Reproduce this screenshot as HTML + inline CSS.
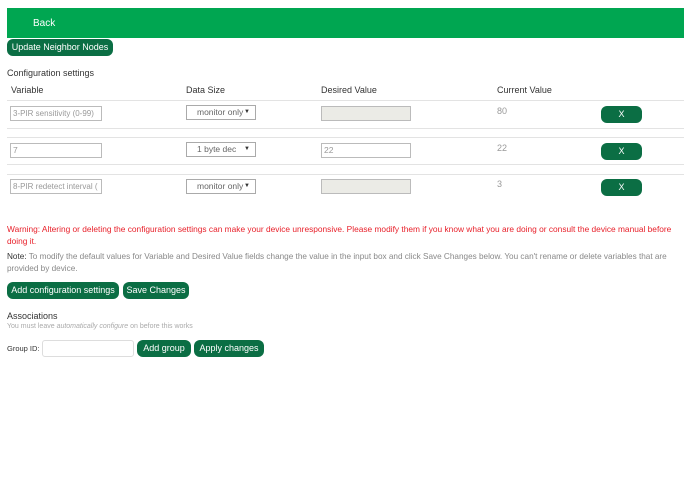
<!DOCTYPE html>
<html><head><style>
*{margin:0;padding:0;box-sizing:border-box}
body{width:690px;height:502px;background:#fff;font-family:"Liberation Sans",sans-serif;font-size:9px;color:#333;position:relative;overflow:hidden}
.a{position:absolute;white-space:nowrap}
.bar{position:absolute;left:7px;top:8px;width:677px;height:30px;background:#00a651}
.btn{position:absolute;background:#0b6e44;color:#fff;border-radius:6px;height:17px;line-height:17px;text-align:center;font-size:9px}
.inp{position:absolute;height:15px;border:1px solid #bbb;background:#fff;color:#999;padding-left:2px;line-height:13px;font-size:8.5px;overflow:hidden;white-space:nowrap}
.dis{background:#ebebe6}
.sel{position:absolute;height:15px;border:1px solid #aaa;background:#fff;color:#666;line-height:13px;font-size:8.5px;padding-left:10px;width:70px}
.sel:after{content:"▼";position:absolute;right:5px;top:0;font-size:6px;color:#333}
.hr{position:absolute;left:7px;width:677px;height:1px;background:#e3e3e3}
.cv{position:absolute;color:#999;font-size:9px}
</style></head><body>
<div class="bar"></div>
<div class="a" style="left:33px;top:18px;color:#fff;font-size:10px">Back</div>
<div class="btn" style="left:7px;top:39px;width:106px">Update Neighbor Nodes</div>
<div class="a" style="left:7px;top:68px;font-size:9px">Configuration settings</div>
<div class="a" style="left:11px;top:85px">Variable</div>
<div class="a" style="left:186px;top:85px">Data Size</div>
<div class="a" style="left:321px;top:85px">Desired Value</div>
<div class="a" style="left:497px;top:85px">Current Value</div>

<div class="hr" style="top:100px"></div>
<div class="inp" style="left:10px;top:106px;width:92px;font-size:8px">3-PIR sensitivity (0-99)</div>
<div class="sel" style="left:186px;top:105px">monitor only</div>
<div class="inp dis" style="left:321px;top:106px;width:90px"></div>
<div class="cv" style="left:497px;top:106px">80</div>
<div class="btn" style="left:601px;top:106px;width:41px">X</div>
<div class="hr" style="top:128px"></div>

<div class="hr" style="top:137px"></div>
<div class="inp" style="left:10px;top:143px;width:92px">7</div>
<div class="sel" style="left:186px;top:142px">1 byte dec</div>
<div class="inp" style="left:321px;top:143px;width:90px">22</div>
<div class="cv" style="left:497px;top:143px">22</div>
<div class="btn" style="left:601px;top:143px;width:41px">X</div>
<div class="hr" style="top:164px"></div>

<div class="hr" style="top:174px"></div>
<div class="inp" style="left:10px;top:179px;width:92px;font-size:8px">8-PIR redetect interval (</div>
<div class="sel" style="left:186px;top:179px">monitor only</div>
<div class="inp dis" style="left:321px;top:179px;width:90px"></div>
<div class="cv" style="left:497px;top:179px">3</div>
<div class="btn" style="left:601px;top:179px;width:41px">X</div>

<div class="a" style="left:7px;top:223px;color:#e8202a;line-height:12px;font-size:8.35px">Warning: Altering or deleting the configuration settings can make your device unresponsive. Please modify them if you know what you are doing or consult the device manual before<br>doing it.</div>
<div class="a" style="left:7px;top:251px;color:#888;line-height:12px;font-size:8.2px"><span style="color:#333">Note:</span> To modify the default values for Variable and Desired Value fields change the value in the input box and click Save Changes below. You can't rename or delete variables that are<br>provided by device.</div>
<div class="btn" style="left:7px;top:282px;width:112px">Add configuration settings</div>
<div class="btn" style="left:123px;top:282px;width:66px">Save Changes</div>
<div class="a" style="left:7px;top:311px;font-size:9px">Associations</div>
<div class="a" style="left:7px;top:323px;font-size:7px;color:#aaa">You must leave <i>automatically configure</i> on before this works</div>
<div class="a" style="left:7px;top:344px;font-size:7.5px">Group ID:</div>
<div class="inp" style="left:42px;top:340px;width:92px;height:17px;border-color:#ddd;border-radius:3px"></div>
<div class="btn" style="left:137px;top:340px;width:54px">Add group</div>
<div class="btn" style="left:194px;top:340px;width:70px">Apply changes</div>
</body></html>
